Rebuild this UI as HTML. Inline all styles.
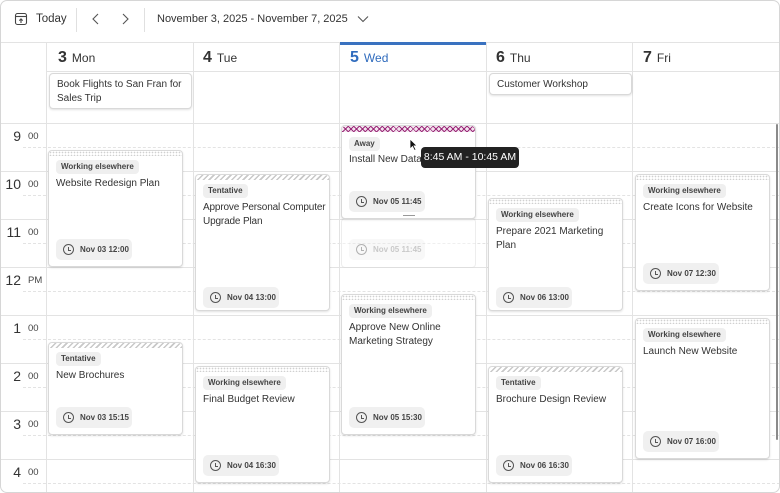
<!DOCTYPE html>
<html><head><meta charset="utf-8">
<style>
*{box-sizing:border-box;margin:0;padding:0}
body{width:780px;height:493px;background:#fff;font-family:"Liberation Sans",sans-serif;color:#242424;overflow:hidden;position:relative}
.frame{position:absolute;left:0;top:0;width:780px;height:493px;overflow:hidden}
.bord{position:absolute;left:0;top:0;width:780px;height:493px;border:1px solid #d6d6d6;border-radius:7px;pointer-events:none}
.a{position:absolute}
.hl{position:absolute;height:1px;background:#e3e3e3}
.dl{position:absolute;height:0;border-top:1px dashed #e3e3e3}
.vl{position:absolute;width:1px;background:#e3e3e3}
.day{position:absolute;top:49px;font-size:16px;font-weight:bold;color:#333}
.day span{font-size:12px;font-weight:normal;margin-left:5px}
.hr{position:absolute;font-size:14px;color:#333;width:21px;text-align:right;left:0}
.mn{position:absolute;font-size:9.5px;color:#444;left:28px}
.ev{position:absolute;background:#fff;border:1px solid #d9d9d9;border-radius:4px;box-shadow:0 1px 2px rgba(0,0,0,.12)}
.ten:before,.wrk:before,.awy:before{content:"";position:absolute;left:0;right:0;top:0;height:5px;border-radius:4px 4px 0 0}
.ten:before{background:repeating-linear-gradient(135deg,#c8c8c8 0 1.5px,#fff 1.5px 4px)}
.wrk:before{background:radial-gradient(circle,#d0d0d0 0.7px,transparent 0.9px) 0 0/3px 3px}
.awy:before{height:6px;background:repeating-linear-gradient(45deg,#9b2c7a 0 1px,transparent 1px 4px),repeating-linear-gradient(135deg,#9b2c7a 0 1px,#f3e3ee 1px 4px)}
.tag{position:absolute;left:7px;top:9px;background:#efefef;border-radius:4px;font-size:8px;font-weight:bold;color:#444;padding:2px 5px;line-height:10px}
.ti{position:absolute;left:7px;top:26px;right:4px;font-size:10px;line-height:14px;color:#333}
.dp{position:absolute;left:7px;width:76px;height:21px;background:#f0f0f0;border-radius:5px;font-size:8px;font-weight:bold;color:#444;line-height:21px;padding-left:24px}
.dp:before{content:"";position:absolute;left:7px;top:5px;width:9px;height:9px;border:1.2px solid #555;border-radius:50%}
.dp:after{content:"";position:absolute;left:11.5px;top:7.5px;width:2px;height:3px;border-left:1.2px solid #555;border-bottom:1.2px solid #555}
</style></head><body>
<div class="frame">
<svg class="a" style="left:14px;top:12px" width="14" height="14" viewBox="0 0 14 14"><rect x="1.5" y="1.5" width="11" height="11" rx="2" fill="none" stroke="#444" stroke-width="1.1"/><line x1="1.5" y1="4.5" x2="12.5" y2="4.5" stroke="#444" stroke-width="1.1"/><path d="M7 11V7M5.3 8.6L7 6.9 8.7 8.6" fill="none" stroke="#444" stroke-width="1.1"/></svg>
<div class="a" style="left:36px;top:13px;font-size:11.5px;color:#333">Today</div>
<div class="a" style="left:76px;top:8px;width:1px;height:24px;background:#e0e0e0"></div>
<svg class="a" style="left:91px;top:13px" width="10" height="12"><path d="M7 1L2 6l5 5" fill="none" stroke="#555" stroke-width="1.1"/></svg>
<svg class="a" style="left:120px;top:13px" width="10" height="12"><path d="M3 1l5 5-5 5" fill="none" stroke="#555" stroke-width="1.1"/></svg>
<div class="a" style="left:144px;top:8px;width:1px;height:24px;background:#e0e0e0"></div>
<div class="a" style="left:157px;top:13px;font-size:11px;color:#333">November 3, 2025 - November 7, 2025</div>
<svg class="a" style="left:357px;top:15px" width="12" height="8"><path d="M1 1.5l5 5 5-5" fill="none" stroke="#555" stroke-width="1.1"/></svg>
<div class="hl" style="left:0;right:0;top:42px"></div>

<div class="vl" style="left:46px;top:43px;height:450px"></div>
<div class="vl" style="left:193px;top:43px;height:450px"></div>
<div class="vl" style="left:339px;top:43px;height:450px"></div>
<div class="vl" style="left:486px;top:43px;height:450px"></div>
<div class="vl" style="left:632px;top:43px;height:450px"></div>
<div class="a" style="left:340px;top:42px;width:146px;height:3px;background:#3a72c0"></div>
<div class="day" style="left:58px">3<span>Mon</span></div>
<div class="day" style="left:203px">4<span>Tue</span></div>
<div class="day" style="left:350px;color:#2f6bbd">5<span>Wed</span></div>
<div class="day" style="left:496px">6<span>Thu</span></div>
<div class="day" style="left:643px">7<span>Fri</span></div>
<div class="hl" style="left:47px;right:0;top:71px"></div>
<div class="hl" style="left:0;right:0;top:123px"></div>

<div class="hl" style="left:0;right:0;top:171px"></div>
<div class="hl" style="left:0;right:0;top:219px"></div>
<div class="hl" style="left:0;right:0;top:267px"></div>
<div class="hl" style="left:0;right:0;top:315px"></div>
<div class="hl" style="left:0;right:0;top:363px"></div>
<div class="hl" style="left:0;right:0;top:411px"></div>
<div class="hl" style="left:0;right:0;top:459px"></div>
<div class="dl" style="left:23px;right:0;top:147px"></div>
<div class="dl" style="left:23px;right:0;top:195px"></div>
<div class="dl" style="left:23px;right:0;top:243px"></div>
<div class="dl" style="left:23px;right:0;top:291px"></div>
<div class="dl" style="left:23px;right:0;top:339px"></div>
<div class="dl" style="left:23px;right:0;top:387px"></div>
<div class="dl" style="left:23px;right:0;top:435px"></div>
<div class="dl" style="left:23px;right:0;top:483px"></div>

<div class="hr" style="top:128px">9</div><div class="mn" style="top:131px">00</div>
<div class="hr" style="top:176px">10</div><div class="mn" style="top:179px">00</div>
<div class="hr" style="top:224px">11</div><div class="mn" style="top:227px">00</div>
<div class="hr" style="top:272px">12</div><div class="mn" style="top:275px">PM</div>
<div class="hr" style="top:320px">1</div><div class="mn" style="top:323px">00</div>
<div class="hr" style="top:368px">2</div><div class="mn" style="top:371px">00</div>
<div class="hr" style="top:416px">3</div><div class="mn" style="top:419px">00</div>
<div class="hr" style="top:464px">4</div><div class="mn" style="top:467px">00</div>

<div class="a" style="left:776px;top:124px;width:2px;height:316px;background:#8a8a8a;border-radius:1px"></div>

<div class="ev" style="left:49px;top:73px;width:143px;height:36px"><div class="ti" style="top:4px">Book Flights to San Fran for Sales Trip</div></div>
<div class="ev" style="left:489px;top:73px;width:143px;height:22px"><div class="ti" style="top:4px">Customer Workshop</div></div>

<div class="ev wrk" style="left:48px;top:150px;width:135px;height:117px"><div class="tag">Working elsewhere</div><div class="ti">Website Redesign Plan</div><div class="dp" style="top:88px">Nov 03 12:00</div></div>
<div class="ev ten" style="left:48px;top:342px;width:135px;height:93px"><div class="tag">Tentative</div><div class="ti">New Brochures</div><div class="dp" style="top:64px">Nov 03 15:15</div></div>

<div class="ev ten" style="left:195px;top:174px;width:135px;height:137px"><div class="tag">Tentative</div><div class="ti" style="right:0;letter-spacing:-0.15px">Approve Personal Computer Upgrade Plan</div><div class="dp" style="top:112px">Nov 04 13:00</div></div>
<div class="ev wrk" style="left:195px;top:366px;width:135px;height:117px"><div class="tag">Working elsewhere</div><div class="ti">Final Budget Review</div><div class="dp" style="top:88px">Nov 04 16:30</div></div>

<div class="ev" style="left:341px;top:218px;width:135px;height:50px;opacity:.45;box-shadow:none"><div class="dp" style="top:20px;color:#888">Nov 05 11:45</div></div>
<div class="ev awy" style="left:341px;top:125px;width:135px;height:94px"><div class="tag" style="top:11px">Away</div><div class="ti" style="top:27px">Install New Database</div><div class="dp" style="top:65px">Nov 05 11:45</div><div class="a" style="left:61px;bottom:2px;width:12px;height:1px;background:#999"></div></div>
<div class="ev wrk" style="left:341px;top:294px;width:135px;height:141px"><div class="tag">Working elsewhere</div><div class="ti">Approve New Online Marketing Strategy</div><div class="dp" style="top:112px">Nov 05 15:30</div></div>

<div class="ev wrk" style="left:488px;top:198px;width:135px;height:113px"><div class="tag">Working elsewhere</div><div class="ti">Prepare 2021 Marketing Plan</div><div class="dp" style="top:88px">Nov 06 13:00</div></div>
<div class="ev ten" style="left:488px;top:366px;width:135px;height:117px"><div class="tag">Tentative</div><div class="ti">Brochure Design Review</div><div class="dp" style="top:88px">Nov 06 16:30</div></div>

<div class="ev wrk" style="left:635px;top:174px;width:135px;height:117px"><div class="tag">Working elsewhere</div><div class="ti">Create Icons for Website</div><div class="dp" style="top:88px">Nov 07 12:30</div></div>
<div class="ev wrk" style="left:635px;top:318px;width:135px;height:141px"><div class="tag">Working elsewhere</div><div class="ti">Launch New Website</div><div class="dp" style="top:112px">Nov 07 16:00</div></div>

<div class="a" style="left:421px;top:147px;width:98px;height:21px;background:#222;border-radius:4px;color:#fff;font-size:10.5px;line-height:21px;text-align:center">8:45 AM - 10:45 AM</div>
<svg class="a" style="left:409px;top:138px" width="10" height="14"><path d="M1 1v10l2.5-2.5 2 4 1.5-.8-2-3.8H8z" fill="#111" stroke="#fff" stroke-width=".8"/></svg>
</div>
<div class="bord"></div>
</body></html>
